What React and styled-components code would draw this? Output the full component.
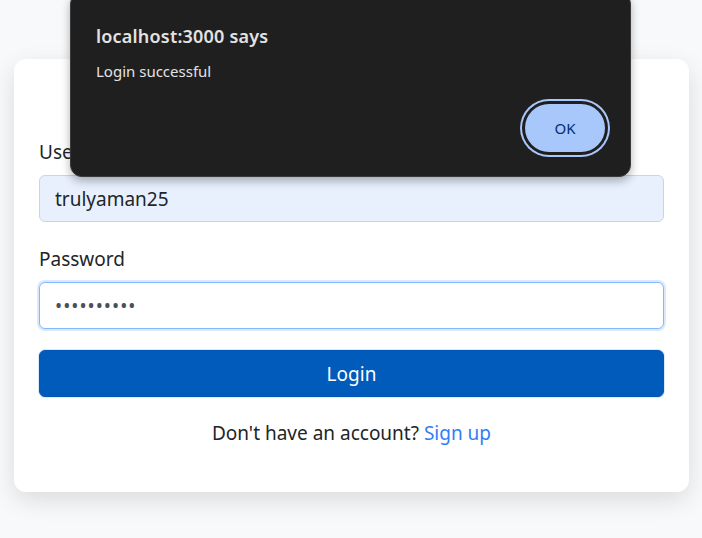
import React from 'react';
import styled, { createGlobalStyle } from 'styled-components';

const GlobalStyle = createGlobalStyle`
  * { box-sizing: border-box; }
  body {
    margin: 0;
    background: #f8f9fa;
    font-family: "Segoe UI", "Noto Sans", "Open Sans", sans-serif;
    color: #212529;
  }
`;

const Page = styled.div`
  position: relative;
  height: 538px;
  overflow: hidden;
  padding-top: 59px;
`;

const Card = styled.div`
  width: 675px;
  margin-left: 14px;
  background: #fff;
  border-radius: 12px;
  box-shadow: 0 8px 24px rgba(0, 0, 0, 0.12);
  padding: 78px 25px 44px;
`;

const Label = styled.label`
  display: block;
  font-size: 19px;
  line-height: 30px;
  margin-bottom: 8px;
`;

const Field = styled.div`
  margin-bottom: ${p => p.$gap}px;
`;

const Input = styled.input`
  display: block;
  width: 100%;
  height: 47px;
  padding: 0 15px;
  font-family: inherit;
  font-size: 19px;
  color: ${p => (p.type === 'password' ? '#495057' : '#212529')};
  letter-spacing: ${p => (p.type === 'password' ? '1px' : 'normal')};
  border-radius: 6px;
  outline: none;
  background: ${p => (p.$autofill ? '#e8f0fe' : '#fff')};
  border: 1px solid ${p => (p.$focus ? '#86b7fe' : '#ced4da')};
  box-shadow: ${p => (p.$focus ? '0 0 0 2px rgba(13, 110, 253, 0.15)' : 'none')};
`;

const Button = styled.button`
  display: block;
  width: 100%;
  height: 47px;
  border: 1px solid #0058bb;
  border-radius: 6px;
  background: #005bbb;
  color: #fff;
  font-family: inherit;
  font-size: 19px;
  box-shadow: 0 0 0 1px #dbe9fb;
`;

const Footer = styled.p`
  margin: 21px 0 0;
  text-align: center;
  font-size: 19px;
  line-height: 30px;
  a {
    color: #2f7ef5;
    text-decoration: none;
  }
`;

const Dialog = styled.div`
  position: absolute;
  left: 70px;
  top: -8px;
  width: 561px;
  height: 185px;
  background: #1f1f1f;
  border: 1px solid #3a3a3a;
  border-radius: 12px;
  box-shadow: 0 4px 10px rgba(0, 0, 0, 0.3);
  padding: 31px 24px 0 25px;
  color: #e3e3e3;
  display: flex;
  flex-direction: column;
`;

const DialogTitle = styled.div`
  font-size: 18px;
  font-weight: 600;
  line-height: 24px;
  letter-spacing: 0.2px;
`;

const DialogText = styled.div`
  font-size: 15px;
  line-height: 20px;
  margin-top: 13px;
`;

const DialogActions = styled.div`
  display: flex;
  justify-content: flex-end;
  margin-top: 23px;
`;

const OkButton = styled.button`
  width: 80px;
  height: 48px;
  border: none;
  border-radius: 24px;
  background: #a8c7fa;
  color: #062e6f;
  font-family: inherit;
  font-size: 15px;
  box-shadow: 0 0 0 3px #1f1f1f, 0 0 0 5px #a8c7fa;
  margin-right: 1px;
`;

export default function App() {
  return (
    <>
      <GlobalStyle />
      <Page>
        <Card>
          <Field $gap={22}>
            <Label>Username</Label>
            <Input $autofill defaultValue="trulyaman25" />
          </Field>
          <Field $gap={21}>
            <Label>Password</Label>
            <Input $focus type="password" defaultValue="trulyaman1" />
          </Field>
          <Button>Login</Button>
          <Footer>
            Don't have an account? <a href="#">Sign up</a>
          </Footer>
        </Card>
        <Dialog>
          <DialogTitle>localhost:3000 says</DialogTitle>
          <DialogText>Login successful</DialogText>
          <DialogActions>
            <OkButton>OK</OkButton>
          </DialogActions>
        </Dialog>
      </Page>
    </>
  );
}
